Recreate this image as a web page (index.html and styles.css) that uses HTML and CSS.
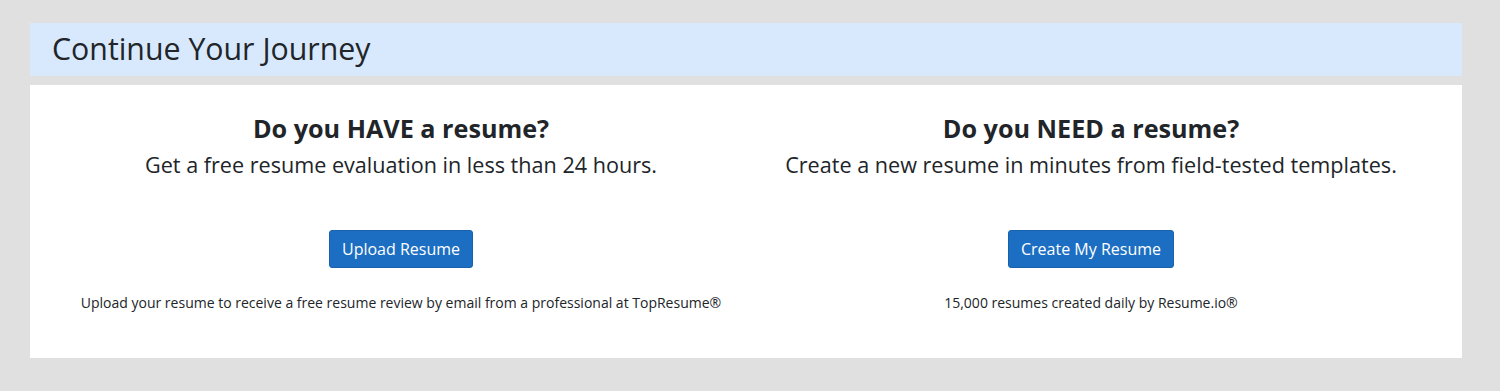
FILE: index.html
```html
<!DOCTYPE html>
<html lang="en">
<head>
<meta charset="utf-8">
<title>Continue Your Journey</title>
<link rel="stylesheet" href="styles.css">
</head>
<body>
<div class="page">
  <div class="banner"><h1 class="banner-title">Continue Your Journey</h1></div>
  <div class="card">
    <div class="col">
      <h2 class="col-title">Do you HAVE a resume?</h2>
      <p class="col-sub">Get a free resume evaluation in less than 24 hours.</p>
      <a class="btn" href="#">Upload Resume</a>
      <p class="col-note">Upload your resume to receive a free resume review by email from a professional at TopResume®</p>
    </div>
    <div class="col">
      <h2 class="col-title">Do you NEED a resume?</h2>
      <p class="col-sub">Create a new resume in minutes from field-tested templates.</p>
      <a class="btn" href="#">Create My Resume</a>
      <p class="col-note">15,000 resumes created daily by Resume.io®</p>
    </div>
  </div>
</div>
</body>
</html>
```
FILE: styles.css
```css
html, body { margin: 0; padding: 0; }
body {
  background: #e0e0e0;
  font-family: "Open Sans", "Noto Sans", sans-serif;
  color: #212529;
}
.page {
  padding: 23px 38px 0 30px;
}
.banner {
  background: #d8e9fd;
  height: 53px;
  display: flex;
  align-items: center;
  padding-left: 22px;
}
.banner-title {
  margin: 0;
  font-size: 30.3px;
  font-weight: 400;
  line-height: 1;
}
.card {
  margin-top: 9px;
  background: #fff;
  height: 273px;
  display: grid;
  grid-template-columns: 690px 690px;
  justify-content: center;
}
.col {
  display: flex;
  flex-direction: column;
  align-items: center;
  text-align: center;
  padding-top: 26px;
}
.col-title {
  margin: 0;
  font-size: 25.2px;
  font-weight: 700;
  line-height: 34px;
}
.col-sub {
  margin: 5px 0 0;
  font-size: 21.6px;
  line-height: 30px;
}
.btn {
  margin-top: 50px;
  display: inline-block;
  background: #1b6ec2;
  border: 1px solid #1861ac;
  color: #fff;
  text-decoration: none;
  border-radius: 3px;
  font-size: 16px;
  line-height: 24px;
  padding: 6px 12px;
}
.col-note {
  margin: 25px 0 0;
  font-size: 14px;
  line-height: 20px;
}
```
